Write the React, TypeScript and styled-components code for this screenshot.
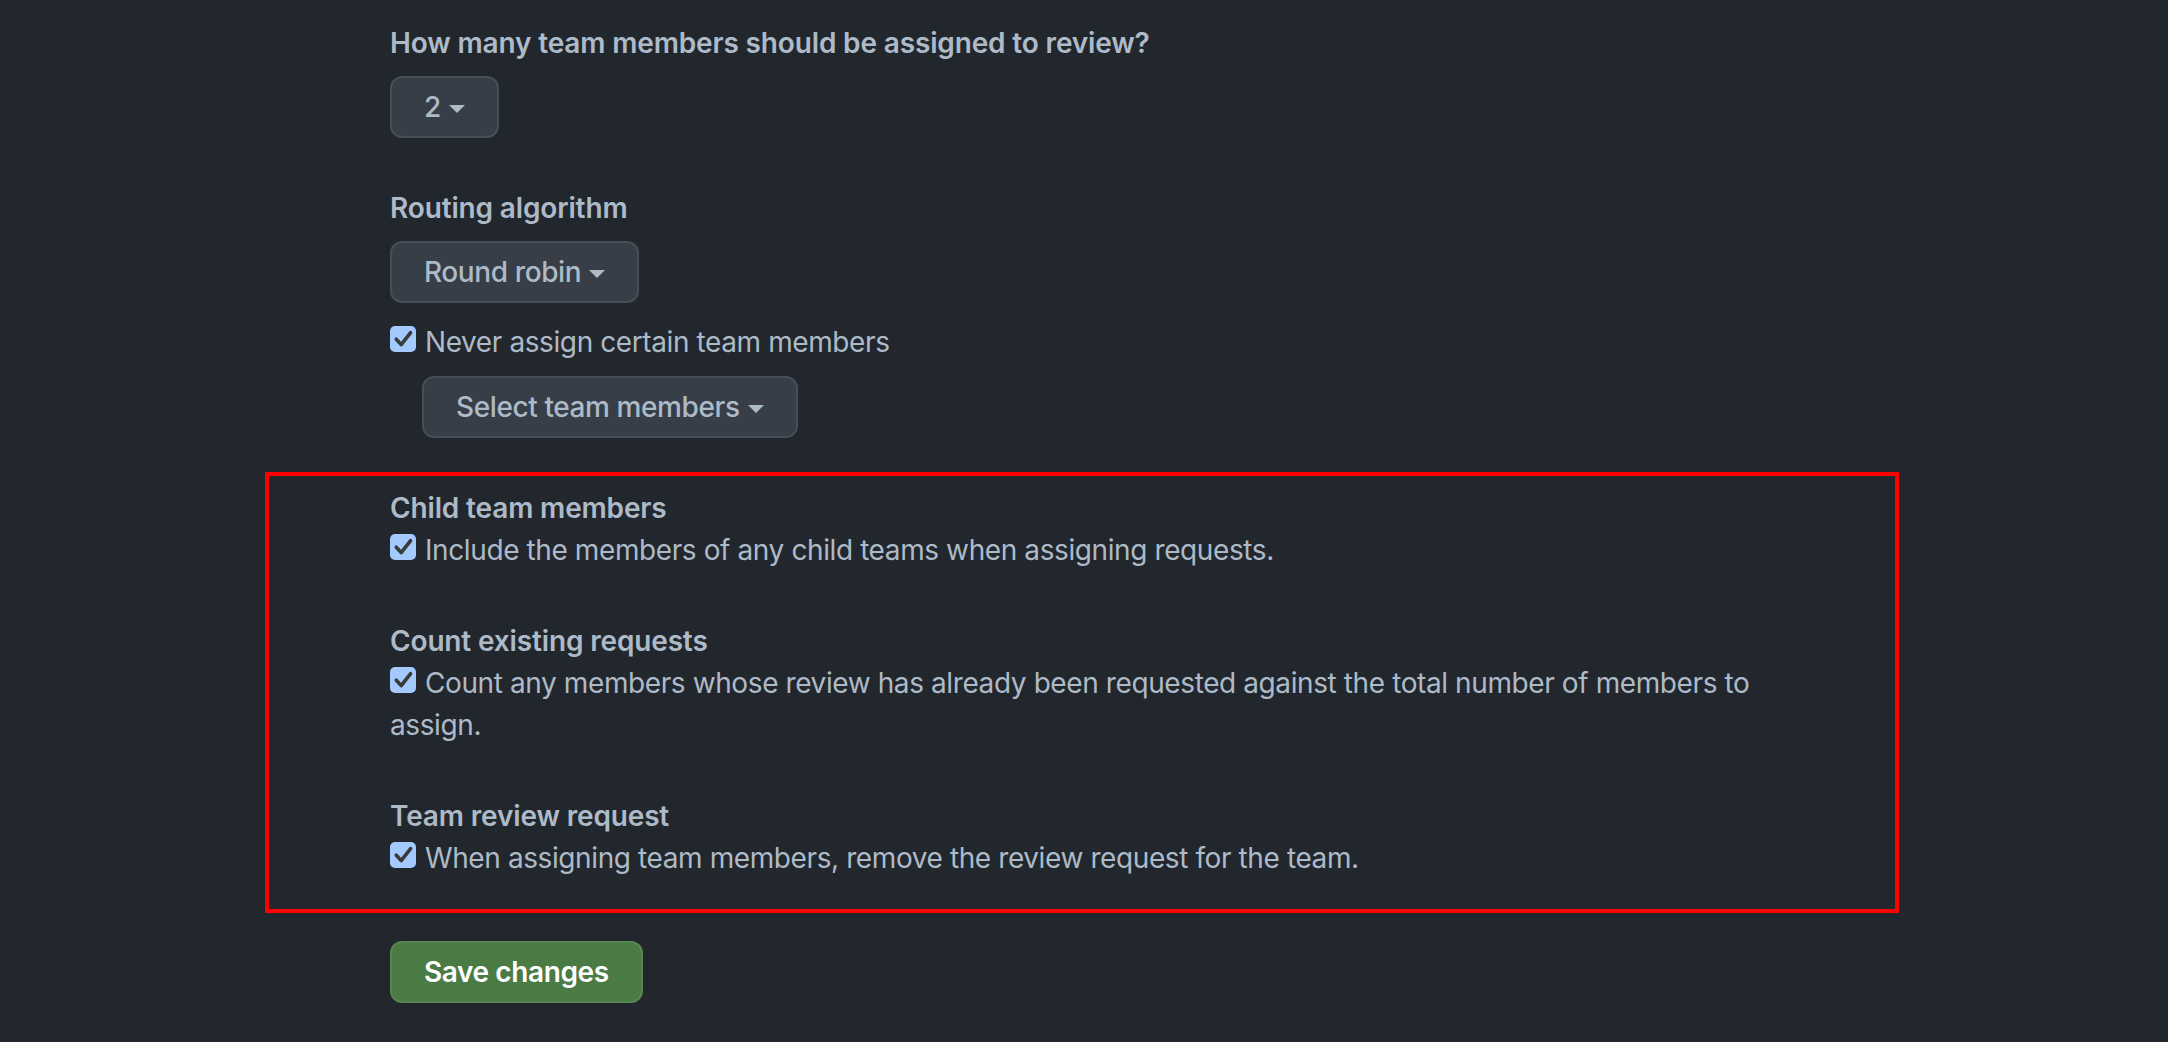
import React from "react";
import styled, { createGlobalStyle } from "styled-components";

const GlobalStyle = createGlobalStyle`
  html, body {
    margin: 0;
    padding: 0;
    background-color: #22272e;
  }

  body {
    font-family: "Inter", "Liberation Sans", sans-serif;
    color: #adbac7;
    font-size: 28px;
    line-height: 42px;
    letter-spacing: -0.4px;
  }
`;

const settings = [
  {
    title: "Child team members",
    text: "Include the members of any child teams when assigning requests.",
  },
  {
    title: "Count existing requests",
    text: "Count any members whose review has already been requested against the total number of members to assign.",
  },
  {
    title: "Team review request",
    text: "When assigning team members, remove the review request for the team.",
  },
];

const CheckMark = () => (
  <svg width="26" height="26" viewBox="0 0 26 26" aria-hidden="true">
    <path
      d="M6.3 13.2 L11.2 18.6 L20.6 6.6"
      fill="none"
      stroke="#3a3a3a"
      strokeWidth="3.6"
      strokeLinecap="round"
      strokeLinejoin="round"
    />
  </svg>
);

const Checkbox = () => (
  <StyledCheckbox role="checkbox" aria-checked="true">
    <CheckMark />
  </StyledCheckbox>
);

const Dropdown = ({ label }: { label: string }) => (
  <StyledButton type="button">
    {label}
    <Caret />
  </StyledButton>
);

const App = () => {
  return (
    <>
      <GlobalStyle />
      <Page>
        <Form>
          <Group>
            <Label>How many team members should be assigned to review?</Label>
            <Dropdown label="2" />
          </Group>

          <Group spacing={49}>
            <Label>Routing algorithm</Label>
            <Dropdown label="Round robin" />
            <CheckRow spacing={18}>
              <Checkbox />
              Never assign certain team members
            </CheckRow>
            <Nested>
              <Dropdown label="Select team members" />
            </Nested>
          </Group>

          <Highlight>
            {settings.map((item) => (
              <Section key={item.title}>
                <Title>{item.title}</Title>
                <CheckRow>
                  <Checkbox />
                  {item.text}
                </CheckRow>
              </Section>
            ))}
          </Highlight>

          <SaveButton type="button">Save changes</SaveButton>
        </Form>
      </Page>
    </>
  );
};

const Page = styled.div`
  min-height: 1042px;
  padding: 22px 0 0 390px;
  box-sizing: border-box;
`;

const Form = styled.div`
  display: flex;
  flex-direction: column;
  align-items: flex-start;
  width: 1409px;
`;

const Group = styled.div<{ spacing?: number }>`
  display: flex;
  flex-direction: column;
  align-items: flex-start;
  margin-top: ${({ spacing }) => spacing ?? 0}px;
`;

const Label = styled.div`
  font-weight: 600;
  letter-spacing: -0.15px;
  margin-bottom: 12px;
`;

const StyledButton = styled.button`
  display: inline-flex;
  align-items: center;
  gap: 8px;
  height: 62px;
  padding: 0 32px;
  box-sizing: border-box;
  border: 2px solid #464e58;
  border-radius: 12px;
  background-color: #373e47;
  color: #adbac7;
  font-family: inherit;
  font-size: 28px;
  font-weight: 500;
  letter-spacing: -0.4px;
  cursor: pointer;
`;

const Caret = styled.span`
  display: inline-block;
  width: 0;
  height: 0;
  margin-top: 4px;
  border-top: 8px solid #adbac7;
  border-left: 8px solid transparent;
  border-right: 8px solid transparent;
`;

const CheckRow = styled.div<{ spacing?: number }>`
  margin-top: ${({ spacing }) => spacing ?? 0}px;
`;

const StyledCheckbox = styled.span`
  display: inline-block;
  width: 26px;
  height: 26px;
  margin-right: 9px;
  border-radius: 5px;
  background-color: #a4cafd;
  vertical-align: baseline;

  svg {
    display: block;
  }
`;

const Nested = styled.div`
  margin: 13px 0 0 32px;
`;

const Highlight = styled.div`
  align-self: stretch;
  display: flex;
  flex-direction: column;
  gap: 49px;
  width: 1634px;
  margin: 34px 0 0 -125px;
  padding: 11px 95px 30px 121px;
  box-sizing: border-box;
  border: 4px solid #ff0000;
`;

const Section = styled.div`
  display: flex;
  flex-direction: column;
`;

const Title = styled.div`
  font-weight: 600;
  letter-spacing: -0.15px;
`;

const SaveButton = styled.button`
  height: 62px;
  margin-top: 28px;
  padding: 0 32px;
  box-sizing: border-box;
  border: 2px solid #56874f;
  border-radius: 12px;
  background-color: #4a7b45;
  color: #ffffff;
  font-family: inherit;
  font-size: 28px;
  font-weight: 600;
  letter-spacing: -0.4px;
  cursor: pointer;
`;

export default App;
